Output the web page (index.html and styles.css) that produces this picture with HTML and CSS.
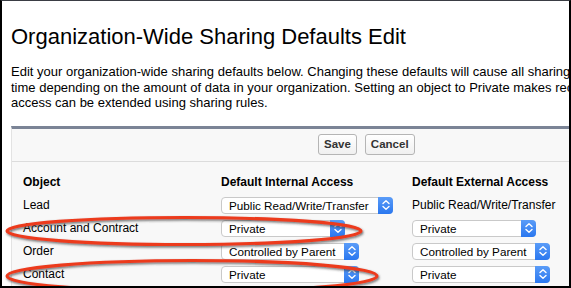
FILE: index.html
```html
<!DOCTYPE html>
<html>
<head>
<meta charset="utf-8">
<link rel="stylesheet" href="styles.css">
</head>
<body>
<div class="frame">
  <h1 class="title">Organization-Wide Sharing Defaults Edit</h1>
  <p class="intro">
    <span class="line">Edit your organization-wide sharing defaults below. Changing these defaults will cause all sharing rules to be recalculated. This could require significant system resources and</span>
    <span class="line">time depending on the amount of data in your organization. Setting an object to Private makes records visible to record owners and those above them in the role hierarchy, and</span>
    <span class="line">access can be extended using sharing rules.</span>
  </p>
  <div class="panel">
    <div class="buttons">
      <button class="btn">Save</button>
      <button class="btn">Cancel</button>
    </div>
    <div class="table">
      <div class="th">Object</div>
      <div class="th">Default Internal Access</div>
      <div class="th">Default External Access</div>

      <div class="td">Lead</div>
      <div class="td"><div class="select w-172"><span class="val">Public Read/Write/Transfer</span><span class="arrow"><svg viewBox="0 0 14 16" width="14" height="16"><path d="M4 6.5 L7 3.8 L10 6.5 M4 9.5 L7 12.2 L10 9.5" fill="none" stroke="#fff" stroke-width="1.4" stroke-linecap="round" stroke-linejoin="round"/></svg></span></div></div>
      <div class="td">Public Read/Write/Transfer</div>

      <div class="td">Account and Contract</div>
      <div class="td"><div class="select w-124"><span class="val">Private</span><span class="arrow"><svg viewBox="0 0 14 16" width="14" height="16"><path d="M4 6.5 L7 3.8 L10 6.5 M4 9.5 L7 12.2 L10 9.5" fill="none" stroke="#fff" stroke-width="1.4" stroke-linecap="round" stroke-linejoin="round"/></svg></span></div></div>
      <div class="td"><div class="select w-124"><span class="val">Private</span><span class="arrow"><svg viewBox="0 0 14 16" width="14" height="16"><path d="M4 6.5 L7 3.8 L10 6.5 M4 9.5 L7 12.2 L10 9.5" fill="none" stroke="#fff" stroke-width="1.4" stroke-linecap="round" stroke-linejoin="round"/></svg></span></div></div>

      <div class="td">Order</div>
      <div class="td"><div class="select w-138"><span class="val">Controlled by Parent</span><span class="arrow"><svg viewBox="0 0 14 16" width="14" height="16"><path d="M4 6.5 L7 3.8 L10 6.5 M4 9.5 L7 12.2 L10 9.5" fill="none" stroke="#fff" stroke-width="1.4" stroke-linecap="round" stroke-linejoin="round"/></svg></span></div></div>
      <div class="td"><div class="select w-138"><span class="val">Controlled by Parent</span><span class="arrow"><svg viewBox="0 0 14 16" width="14" height="16"><path d="M4 6.5 L7 3.8 L10 6.5 M4 9.5 L7 12.2 L10 9.5" fill="none" stroke="#fff" stroke-width="1.4" stroke-linecap="round" stroke-linejoin="round"/></svg></span></div></div>

      <div class="td">Contact</div>
      <div class="td"><div class="select w-138"><span class="val">Private</span><span class="arrow"><svg viewBox="0 0 14 16" width="14" height="16"><path d="M4 6.5 L7 3.8 L10 6.5 M4 9.5 L7 12.2 L10 9.5" fill="none" stroke="#fff" stroke-width="1.4" stroke-linecap="round" stroke-linejoin="round"/></svg></span></div></div>
      <div class="td"><div class="select w-138"><span class="val">Private</span><span class="arrow"><svg viewBox="0 0 14 16" width="14" height="16"><path d="M4 6.5 L7 3.8 L10 6.5 M4 9.5 L7 12.2 L10 9.5" fill="none" stroke="#fff" stroke-width="1.4" stroke-linecap="round" stroke-linejoin="round"/></svg></span></div></div>
    </div>
  </div>
  <svg class="marks" width="571" height="288" viewBox="0 0 571 288">
    <defs>
      <filter id="sh" x="-10%" y="-50%" width="120%" height="200%">
        <feDropShadow dx="1" dy="1.5" stdDeviation="1" flood-color="#333" flood-opacity="0.7"/>
      </filter>
    </defs>
    <ellipse cx="184" cy="231" rx="177" ry="13.5" fill="none" stroke="#ec3a1f" stroke-width="3.2" filter="url(#sh)"/>
    <ellipse cx="192" cy="276" rx="185" ry="15.5" fill="none" stroke="#ec3a1f" stroke-width="3.2" filter="url(#sh)"/>
  </svg>
</div>
</body>
</html>
```

FILE: styles.css
```css
html, body {
  margin: 0;
  padding: 0;
  background: #fff;
}
body {
  width: 571px;
  height: 288px;
  overflow: hidden;
  font-family: "Liberation Sans", Arial, sans-serif;
  color: #000;
}
.frame {
  position: relative;
  box-sizing: border-box;
  width: 571px;
  height: 288px;
  border-left: 2px solid #000;
  border-right: 2px solid #000;
  border-bottom: 2px solid #000;
  border-top: 1px solid #3a3d44;
  overflow: hidden;
  padding-left: 9px;
}
.title {
  margin: 0;
  padding-top: 22px;
  font-size: 22px;
  font-weight: normal;
  line-height: 28px;
  white-space: nowrap;
}
.intro {
  margin: 0;
  padding-top: 13px;
  font-size: 13px;
  line-height: 15.5px;
  white-space: nowrap;
}
.line {
  display: block;
}
.panel {
  margin-top: 15px;
  width: 700px;
  border-top: 3px solid #7b8496;
  border-left: 1px solid #e3e3e3;
  background: #f8f8f8;
}
.buttons {
  display: flex;
  gap: 8px;
  padding: 5px 0 6px 306px;
  border-bottom: 1px solid #dcdcdc;
}
.btn {
  height: 21px;
  padding: 0 5px;
  font-family: "Liberation Sans", Arial, sans-serif;
  font-size: 11.5px;
  font-weight: bold;
  color: #333;
  background: linear-gradient(#fff, #f0f0f0);
  border: 1px solid #b5b5b5;
  border-radius: 3px;
}
.table {
  display: grid;
  grid-template-columns: 198px 191px auto;
  grid-template-rows: 24px;
  grid-auto-rows: 23px;
  padding: 8px 0 0 11px;
  font-size: 12px;
}
.th {
  display: flex;
  align-items: center;
  font-weight: bold;
  font-size: 12px;
}
.td {
  display: flex;
  align-items: center;
}
.select {
  box-sizing: border-box;
  height: 17px;
  display: flex;
  align-items: stretch;
  background: #fff;
  border: 1px solid #c9c9c9;
  border-radius: 4px;
  font-size: 11.7px;
}
.w-172 { width: 172px; }
.w-124 { width: 124px; }
.w-138 { width: 138px; }
.val {
  flex: 1;
  padding-left: 7px;
  display: flex;
  align-items: center;
  white-space: nowrap;
  overflow: hidden;
}
.arrow {
  width: 15px;
  margin: -1px -1px -1px 0;
  border-radius: 0 4px 4px 0;
  background: linear-gradient(#5a9cf8, #2a77ef);
  display: flex;
  align-items: center;
  justify-content: center;
}
.marks {
  position: absolute;
  left: -2px;
  top: -1px;
  pointer-events: none;
}
```
